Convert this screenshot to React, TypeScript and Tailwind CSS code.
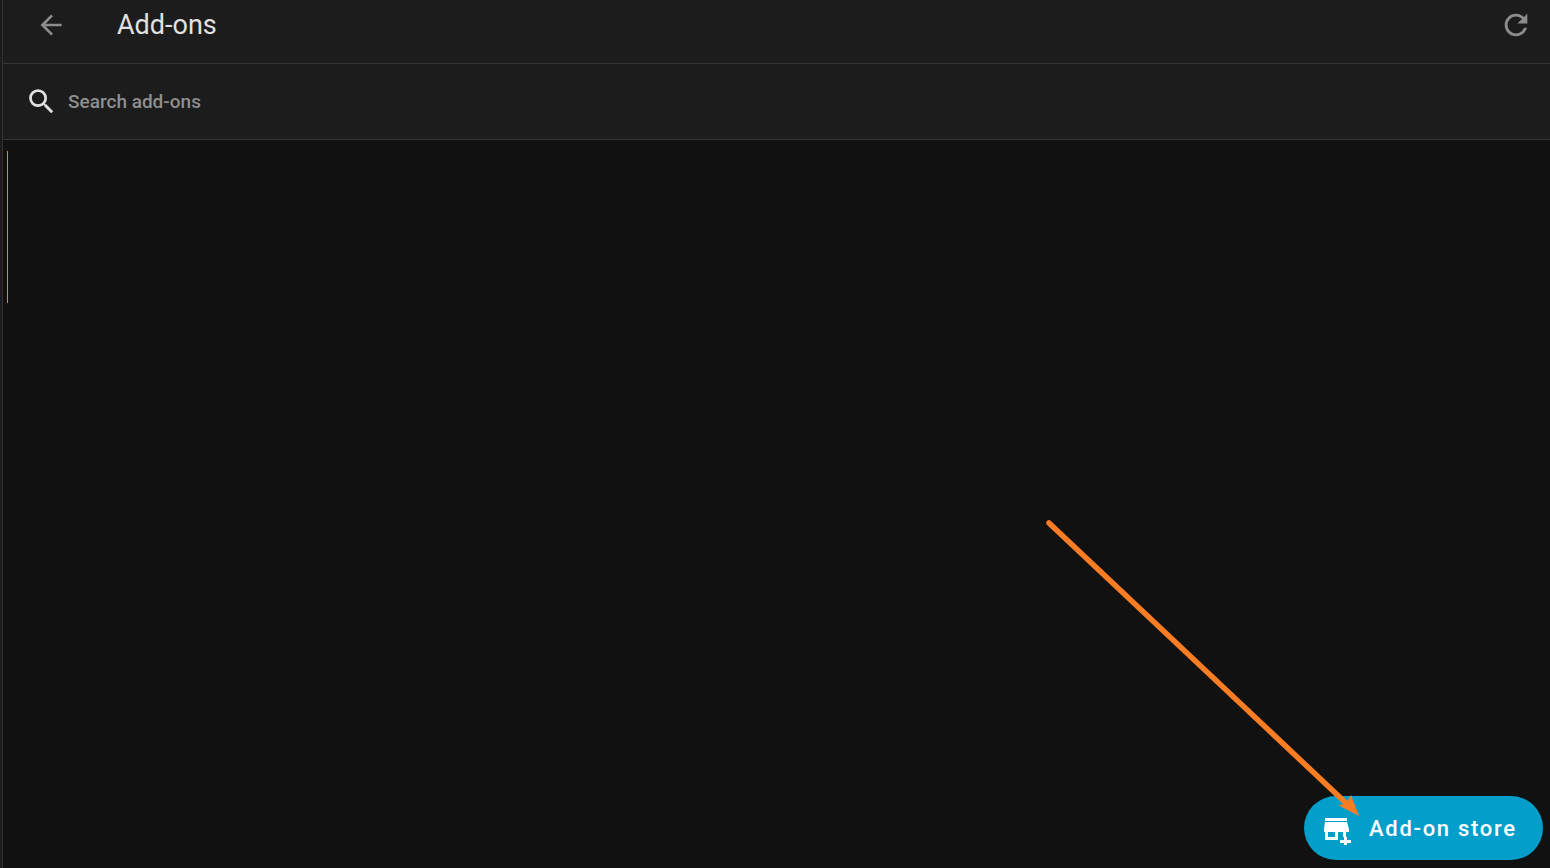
function Icon({ d, className }: { d: string; className: string }) {
  return (
    <svg viewBox="0 0 24 24" className={className} fill="currentColor">
      <path d={d} />
    </svg>
  );
}

export default function App() {
  return (
    <div className="relative flex h-[868px] w-[1550px] overflow-hidden bg-[#111111] font-['Roboto',sans-serif]">
      <div className="h-full w-[3px] shrink-0 border-r border-[#303030] bg-[#1c1c1c]" />
      <div className="flex min-w-0 flex-1 flex-col">
        <header className="flex h-[64px] shrink-0 items-center border-b border-[#353535] bg-[#1c1c1c] pb-[14px] pl-[32px] pr-[17px]">
          <Icon
            className="h-[32px] w-[32px] text-[#8c8c8c]"
            d="M20,11V13H8L13.5,18.5L12.08,19.92L4.16,12L12.08,4.08L13.5,5.5L8,11H20Z"
          />
          <h1 className="ml-[50px] text-[27px] leading-[30px] text-[#e1e1e1]">Add-ons</h1>
          <Icon
            className="ml-auto h-[34px] w-[34px] text-[#8c8c8c]"
            d="M17.65,6.35C16.2,4.9 14.21,4 12,4A8,8 0 0,0 4,12A8,8 0 0,0 12,20C15.73,20 18.84,17.45 19.73,14H17.65C16.83,16.33 14.61,18 12,18A6,6 0 0,1 6,12A6,6 0 0,1 12,6C13.66,6 15.14,6.69 16.22,7.78L13,11H20V4L17.65,6.35Z"
          />
        </header>
        <div className="flex h-[76px] shrink-0 items-center border-b border-[#353535] bg-[#1c1c1c] pl-[22px]">
          <Icon
            className="h-[33px] w-[33px] text-[#e1e1e1]"
            d="M9.5,3A6.5,6.5 0 0,1 16,9.5C16,11.11 15.41,12.59 14.44,13.73L14.71,14H15.5L20.5,19L19,20.5L14,15.5V14.71L13.73,14.44C12.59,15.41 11.11,16 9.5,16A6.5,6.5 0 0,1 3,9.5A6.5,6.5 0 0,1 9.5,3M9.5,5C7,5 5,7 5,9.5C5,12 7,14 9.5,14C12,14 14,12 14,9.5C14,7 12,5 9.5,5Z"
          />
          <span className="ml-[10px] text-[19px] font-medium leading-[24px] text-[#8f8f8f]">Search add-ons</span>
        </div>
        <main className="relative flex-1 bg-[#111111]">
          <div className="ml-[4px] mt-[11px] h-[152px] w-px bg-[#f08030]" />
          <button className="absolute bottom-[8px] right-[7px] flex h-[64px] w-[239px] items-center rounded-full bg-[#039fca] pl-[18px] text-white">
            <svg viewBox="0 0 30 28" className="mt-[5px] h-[28px] w-[30px]" fill="currentColor">
              <path d="M3 1H25V4H3Z" />
              <path d="M3 5H25L27 12V15H24V20H21V15H16V23H3V15H2V12ZM6 15V20H13V15Z" fillRule="evenodd" />
              <path d="M22 20H25V23H29V26H25V29H22V26H18V23H22Z" />
            </svg>
            <span className="ml-[17px] mt-[1px] text-[22px] font-medium leading-[28px] tracking-[1.7px]">Add-on store</span>
          </button>
        </main>
      </div>
      <svg className="pointer-events-none absolute inset-0" width="1550" height="868" viewBox="0 0 1550 868">
        <line x1="1049" y1="523" x2="1347" y2="804" stroke="#fb7d23" strokeWidth="5.5" strokeLinecap="round" />
        <polygon points="1359,816 1338,805 1346,804 1351,795" fill="#fb7d23" />
      </svg>
    </div>
  );
}
